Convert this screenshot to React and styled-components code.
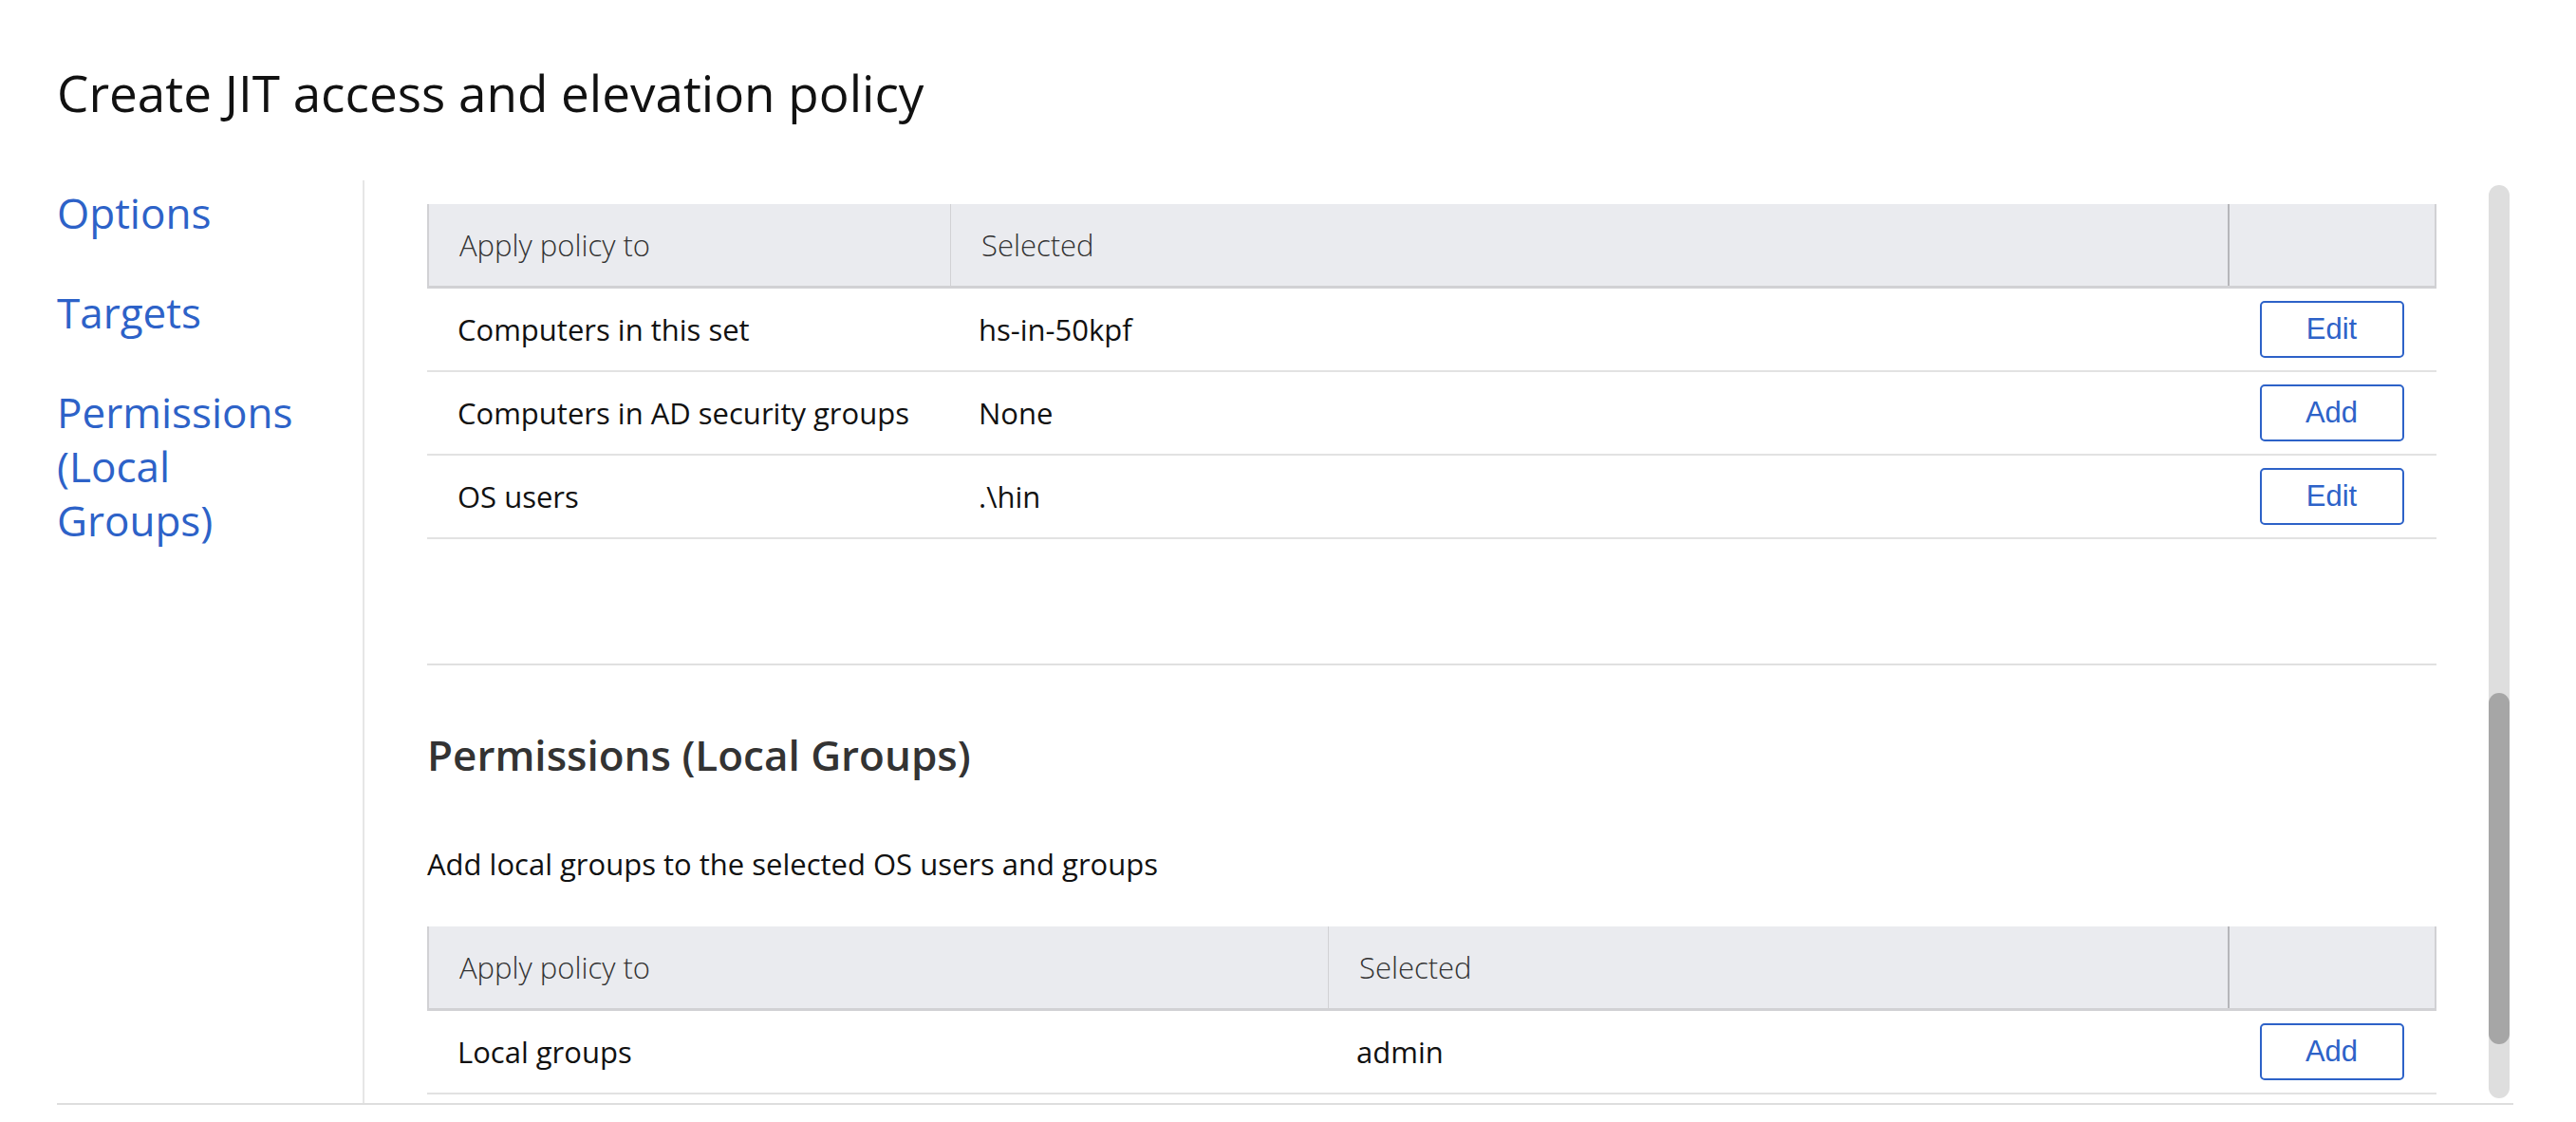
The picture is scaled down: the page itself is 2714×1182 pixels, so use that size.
import React from 'react';
import styled, { createGlobalStyle } from 'styled-components';

const GlobalStyle = createGlobalStyle`
  html, body {
    margin: 0;
    padding: 0;
    background: #fff;
  }
  body {
    font-family: "Open Sans", "Liberation Sans", sans-serif;
    color: #1a1a1a;
  }
`;

const Page = styled.div`
  height: 1182px;
  padding: 62px 66px 0 60px;
  box-sizing: border-box;
  display: flex;
  flex-direction: column;
  overflow: hidden;
`;

const Title = styled.h1`
  margin: 0;
  font-size: 53px;
  font-weight: 400;
  color: #111;
  line-height: 71px;
`;

const Body = styled.div`
  margin-top: 57px;
  height: 972px;
  display: flex;
  border-bottom: 2px solid #dedede;
`;

const Nav = styled.nav`
  width: 322px;
  flex-shrink: 0;
  padding-top: 6px;
  display: flex;
  flex-direction: column;
  gap: 48px;
  border-right: 2px solid #e6e6e6;
`;

const NavLink = styled.a`
  font-size: 44px;
  line-height: 57px;
  color: #2d62c8;
  text-decoration: none;
  width: 260px;
`;

const Content = styled.div`
  flex: 1;
  padding: 25px 55px 0 66px;
  overflow: hidden;
`;

const Table = styled.div`
  display: flex;
  flex-direction: column;
`;

const Row = styled.div`
  display: grid;
  grid-template-columns: ${(p) => p.$cols};
  height: ${(p) => (p.$head ? '89px' : '88px')};
  box-sizing: border-box;
  background: ${(p) => (p.$head ? '#eaebef' : '#fff')};
  border-bottom: ${(p) => (p.$head ? '3px solid #d1d1d4' : '2px solid #e2e2e2')};
  border-left: ${(p) => (p.$head ? '2px solid #d1d1d4' : 'none')};
  border-right: ${(p) => (p.$head ? '2px solid #d1d1d4' : 'none')};
`;

const Cell = styled.div`
  display: flex;
  align-items: center;
  justify-content: ${(p) => (p.$center ? 'center' : 'flex-start')};
  padding-left: ${(p) => (p.$center ? '5px' : '32px')};
  font-size: 31px;
  color: ${(p) => (p.$head ? '#333' : '#111')};
  font-weight: ${(p) => (p.$head ? 300 : 400)};
  white-space: nowrap;
  border-left: ${(p) => p.$divider || 'none'};
`;

const Button = styled.button`
  width: 152px;
  height: 60px;
  box-sizing: border-box;
  border: 2px solid #2d62c8;
  border-radius: 5px;
  background: #fff;
  color: #2d62c8;
  font-family: "Liberation Sans", Arial, sans-serif;
  font-size: 31px;
  padding: 0;
  cursor: pointer;
`;

const Separator = styled.div`
  margin-top: 131px;
  height: 2px;
  background: #e0e0e0;
`;

const SectionTitle = styled.h2`
  margin: 64px 0 0;
  font-size: 44px;
  font-weight: 600;
  color: #333;
  line-height: 60px;
`;

const Description = styled.p`
  margin: 64px 0 0;
  font-size: 31px;
  line-height: 42px;
  color: #111;
`;

const Spacer = styled.div`
  height: 45px;
`;

const Scrollbar = styled.div`
  width: 22px;
  flex-shrink: 0;
  margin: 5px 4px 5px 0;
  border-radius: 11px;
  background: #dedede;
  display: flex;
  flex-direction: column;
`;

const Thumb = styled.div`
  margin-top: 535px;
  height: 370px;
  border-radius: 11px;
  background: #a6a6a6;
`;

const PolicyTable = ({ cols, rows }) => (
  <Table>
    <Row $head $cols={cols}>
      <Cell $head>Apply policy to</Cell>
      <Cell $head $divider="1px solid #d1d1d4">Selected</Cell>
      <Cell $head $divider="2px solid #b6b6ba" />
    </Row>
    {rows.map((r) => (
      <Row key={r.label} $cols={cols}>
        <Cell>{r.label}</Cell>
        <Cell>{r.value}</Cell>
        <Cell $center>
          <Button>{r.action}</Button>
        </Cell>
      </Row>
    ))}
  </Table>
);

const targetRows = [
  { label: 'Computers in this set', value: 'hs-in-50kpf', action: 'Edit' },
  { label: 'Computers in AD security groups', value: 'None', action: 'Add' },
  { label: 'OS users', value: '.\\hin', action: 'Edit' },
];

const groupRows = [{ label: 'Local groups', value: 'admin', action: 'Add' }];

export default function App() {
  return (
    <>
      <GlobalStyle />
      <Page>
        <Title>Create JIT access and elevation policy</Title>
        <Body>
          <Nav>
            <NavLink href="#options">Options</NavLink>
            <NavLink href="#targets">Targets</NavLink>
            <NavLink href="#permissions">Permissions (Local Groups)</NavLink>
          </Nav>
          <Content>
            <PolicyTable cols="549px 1346px 218px" rows={targetRows} />
            <Separator />
            <SectionTitle>Permissions (Local Groups)</SectionTitle>
            <Description>Add local groups to the selected OS users and groups</Description>
            <Spacer />
            <PolicyTable cols="947px 948px 218px" rows={groupRows} />
          </Content>
          <Scrollbar>
            <Thumb />
          </Scrollbar>
        </Body>
      </Page>
    </>
  );
}
